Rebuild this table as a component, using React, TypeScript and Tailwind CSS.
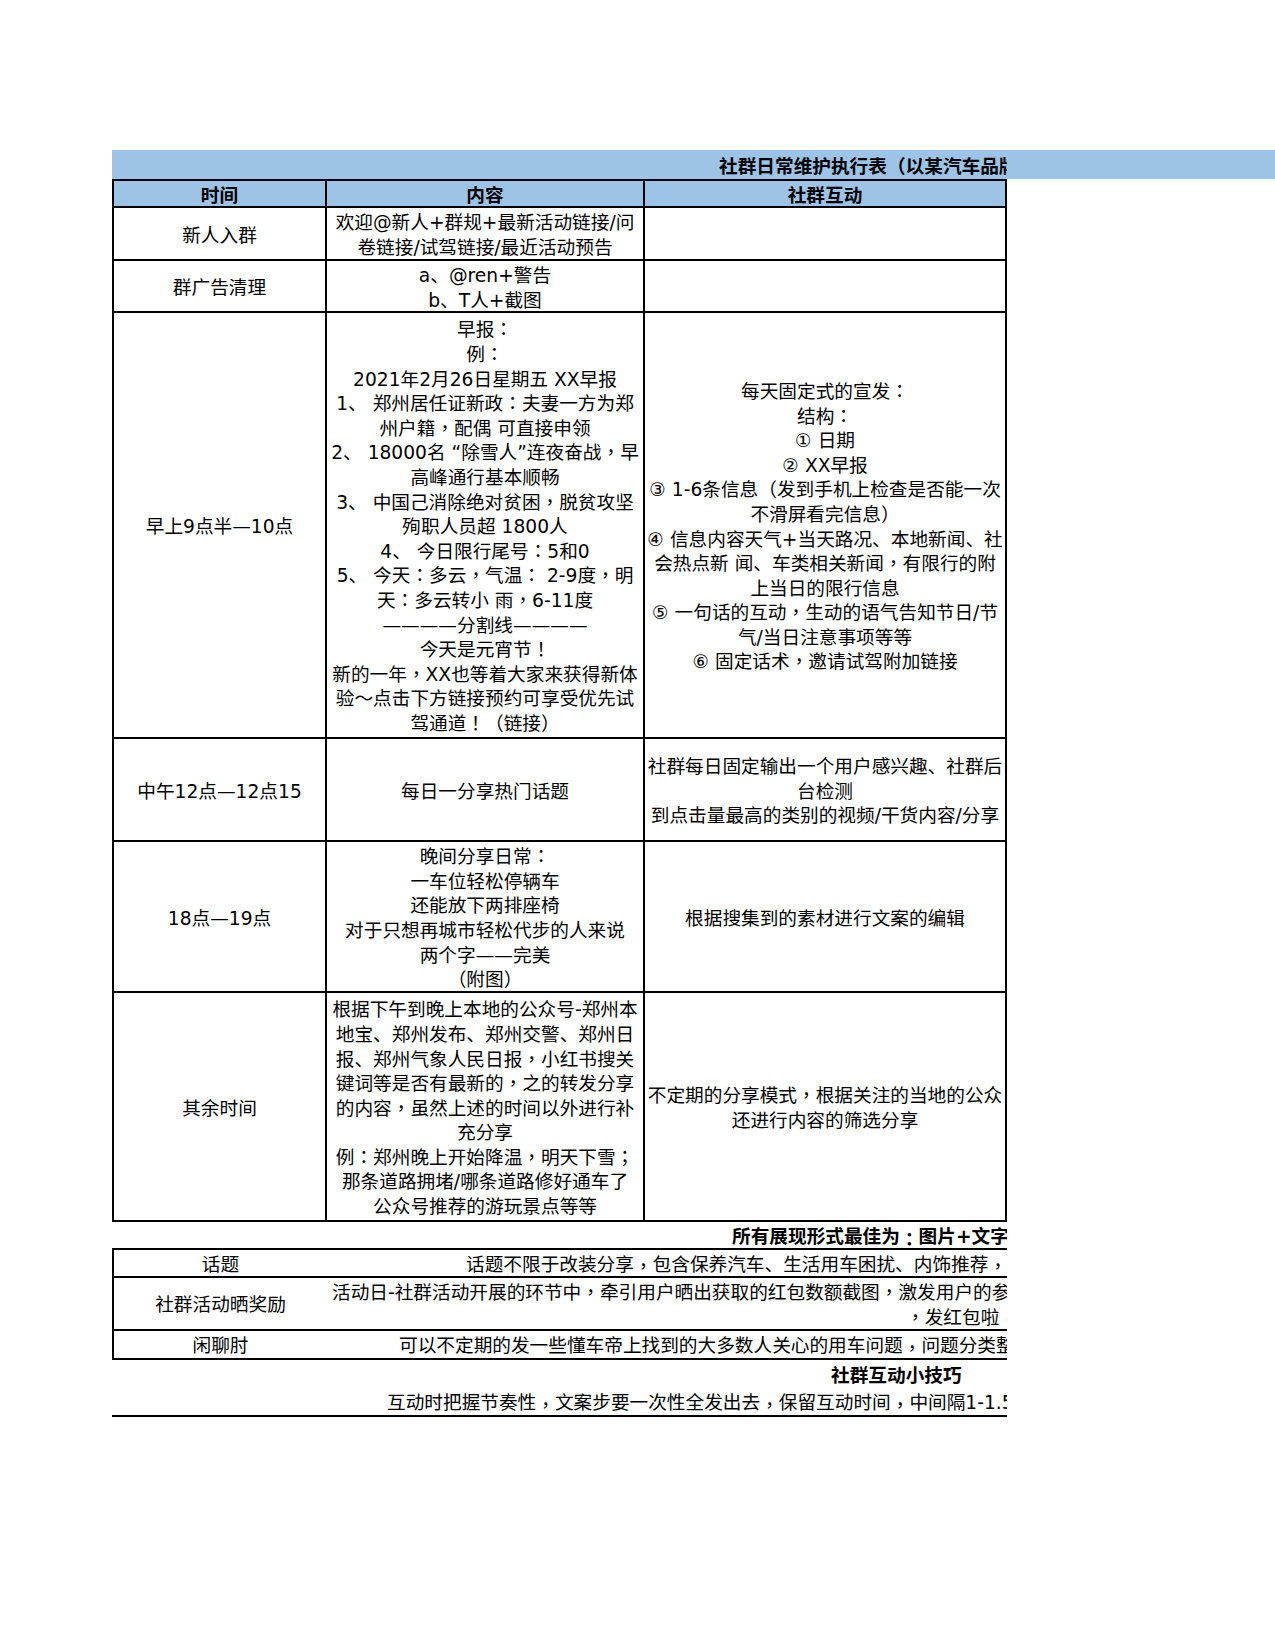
import React from "react";

const row3c2 = [
  "早报：",
  "例：",
  "2021年2月26日星期五 XX早报",
  "1、 郑州居任证新政：夫妻一方为郑",
  "州户籍，配偶 可直接申领",
  "2、 18000名 “除雪人”连夜奋战，早",
  "高峰通行基本顺畅",
  "3、 中国己消除绝对贫困，脱贫攻坚",
  "殉职人员超 1800人",
  "4、 今日限行尾号：5和0",
  "5、 今天：多云，气温： 2-9度，明",
  "天：多云转小 雨，6-11度",
  "————分割线————",
  "今天是元宵节！",
  "新的一年，XX也等着大家来获得新体",
  "验～点击下方链接预约可享受优先试",
  "驾通道！（链接）",
];

const row3c3 = [
  "每天固定式的宣发：",
  "结构：",
  "① 日期",
  "② XX早报",
  "③ 1-6条信息（发到手机上检查是否能一次",
  "不滑屏看完信息）",
  "④ 信息内容天气+当天路况、本地新闻、社",
  "会热点新 闻、车类相关新闻，有限行的附",
  "上当日的限行信息",
  "⑤ 一句话的互动，生动的语气告知节日/节",
  "气/当日注意事项等等",
  "⑥ 固定话术，邀请试驾附加链接",
];

const row6c2 = [
  "根据下午到晚上本地的公众号-郑州本",
  "地宝、郑州发布、郑州交警、郑州日",
  "报、郑州气象人民日报，小红书搜关",
  "键词等是否有最新的，之的转发分享",
  "的内容，虽然上述的时间以外进行补",
  "充分享",
  "例：郑州晚上开始降温，明天下雪；",
  "那条道路拥堵/哪条道路修好通车了",
  "公众号推荐的游玩景点等等",
];

// Full-width punctuation drawn centred in its box, as in the reference.
function T({ s }: { s: string }) {
  const parts = s.split(/([，：；！])/);
  return (
    <>
      {parts.map((p, i) =>
        /^[，：；！]$/.test(p) ? (
          <span key={i} className="font-['Noto_Sans_CJK_TC',sans-serif] leading-[0]">
            {p}
          </span>
        ) : (
          <React.Fragment key={i}>{p}</React.Fragment>
        )
      )}
    </>
  );
}

function Lines({ lines }: { lines: string[] }) {
  return (
    <>
      {lines.map((l, i) => (
        <div key={i} className="h-[24.6px] shrink-0 whitespace-nowrap">
          <T s={l} />
        </div>
      ))}
    </>
  );
}

function Row({
  h,
  header,
  c1,
  c2,
  c3,
}: {
  h: string;
  header?: boolean;
  c1: string[];
  c2: string[];
  c3: string[];
}) {
  return (
    <div
      className={`flex border-b-2 border-black ${h} ${
        header ? "bg-[#9dc3e6] font-bold" : ""
      }`}
    >
      <div className="flex w-[213px] shrink-0 flex-col items-center justify-center border-r-2 border-black pt-[5px] text-center">
        <Lines lines={c1} />
      </div>
      <div className="flex w-[318px] shrink-0 flex-col items-center justify-center border-r-2 border-black pt-[5px] text-center">
        <Lines lines={c2} />
      </div>
      <div className="flex min-w-0 flex-1 flex-col items-center justify-center pt-[5px] text-center">
        <Lines lines={c3} />
      </div>
    </div>
  );
}

export default function App() {
  return (
    <div className="min-h-[1650px] bg-white pt-[150px] font-['DejaVu_Sans','Noto_Sans_CJK_SC',sans-serif] text-[18.67px] leading-[24.6px] text-black">
      {/* Title bar */}
      <div className="ml-[112px] h-[29px] bg-[#9dc3e6]">
        <div className="w-[895px] overflow-hidden whitespace-nowrap pl-[607px] pt-[2px] font-bold leading-[29px]">
          社群日常维护执行表（以某汽车品牌为例）
        </div>
      </div>

      {/* Main table */}
      <div className="ml-[112px] w-[895px] border-x-2 border-t-2 border-black">
        <Row h="h-[27px]" header c1={["时间"]} c2={["内容"]} c3={["社群互动"]} />
        <Row
          h="h-[53px]"
          c1={["新人入群"]}
          c2={["欢迎@新人+群规+最新活动链接/问", "卷链接/试驾链接/最近活动预告"]}
          c3={[]}
        />
        <Row h="h-[52px]" c1={["群广告清理"]} c2={["a、@ren+警告", "b、T人+截图"]} c3={[]} />
        <Row h="h-[426px]" c1={["早上9点半—10点"]} c2={row3c2} c3={row3c3} />
        <Row
          h="h-[103px]"
          c1={["中午12点—12点15"]}
          c2={["每日一分享热门话题"]}
          c3={[
            "社群每日固定输出一个用户感兴趣、社群后",
            "台检测",
            "到点击量最高的类别的视频/干货内容/分享",
          ]}
        />
        <Row
          h="h-[151px]"
          c1={["18点—19点"]}
          c2={[
            "晚间分享日常：",
            "一车位轻松停辆车",
            "还能放下两排座椅",
            "对于只想再城市轻松代步的人来说",
            "两个字——完美",
            "（附图）",
          ]}
          c3={["根据搜集到的素材进行文案的编辑"]}
        />
        <Row
          h="h-[229px]"
          c1={["其余时间"]}
          c2={row6c2}
          c3={["不定期的分享模式，根据关注的当地的公众", "还进行内容的筛选分享"]}
        />
      </div>

      {/* Summary line */}
      <div className="ml-[112px] flex h-[28px] w-[895px] items-center overflow-hidden whitespace-nowrap border-b-2 border-black pl-[620px] pt-[5px] font-bold">
        <T s="所有展现形式最佳为：图片+文字" />
      </div>

      {/* Bottom table */}
      <div className="ml-[112px] w-[895px] overflow-hidden border-l-2 border-black">
        <div className="flex h-[28px] border-b-2 border-black pt-[4px]">
          <div className="flex w-[213px] shrink-0 items-center justify-center">话题</div>
          <div className="flex min-w-0 flex-1 items-center overflow-hidden whitespace-nowrap pl-[139px]">
            <T s="话题不限于改装分享，包含保养汽车、生活用车困扰、内饰推荐，车友出行游玩等" />
          </div>
        </div>
        <div className="flex h-[53px] border-b-2 border-black pt-[4px]">
          <div className="flex w-[213px] shrink-0 items-center justify-center">社群活动晒奖励</div>
          <div className="flex min-w-0 flex-1 flex-col justify-center overflow-hidden whitespace-nowrap">
            <div className="h-[24.6px] pl-[5px]">
              <T s="活动日-社群活动开展的环节中，牵引用户晒出获取的红包数额截图，激发用户的参与感" />
            </div>
            <div className="h-[24.6px] pl-[579px]">
              <T s="，发红包啦，快来抢" />
            </div>
          </div>
        </div>
        <div className="flex h-[29px] border-b-2 border-black pt-[4px]">
          <div className="flex w-[213px] shrink-0 items-center justify-center">闲聊肘</div>
          <div className="flex min-w-0 flex-1 items-center overflow-hidden whitespace-nowrap pl-[72px]">
            <T s="可以不定期的发一些懂车帝上找到的大多数人关心的用车问题，问题分类整理" />
          </div>
        </div>
      </div>

      <div className="ml-[112px] flex h-[28px] w-[895px] items-center overflow-hidden whitespace-nowrap pl-[719px] pt-[4px] font-bold">
        社群互动小技巧
      </div>
      <div className="ml-[112px] flex h-[29px] w-[895px] items-center overflow-hidden whitespace-nowrap border-b-2 border-black pl-[275px] pt-[4px]">
        <T s="互动时把握节奏性，文案步要一次性全发出去，保留互动时间，中间隔1-1.5小时" />
      </div>
    </div>
  );
}
